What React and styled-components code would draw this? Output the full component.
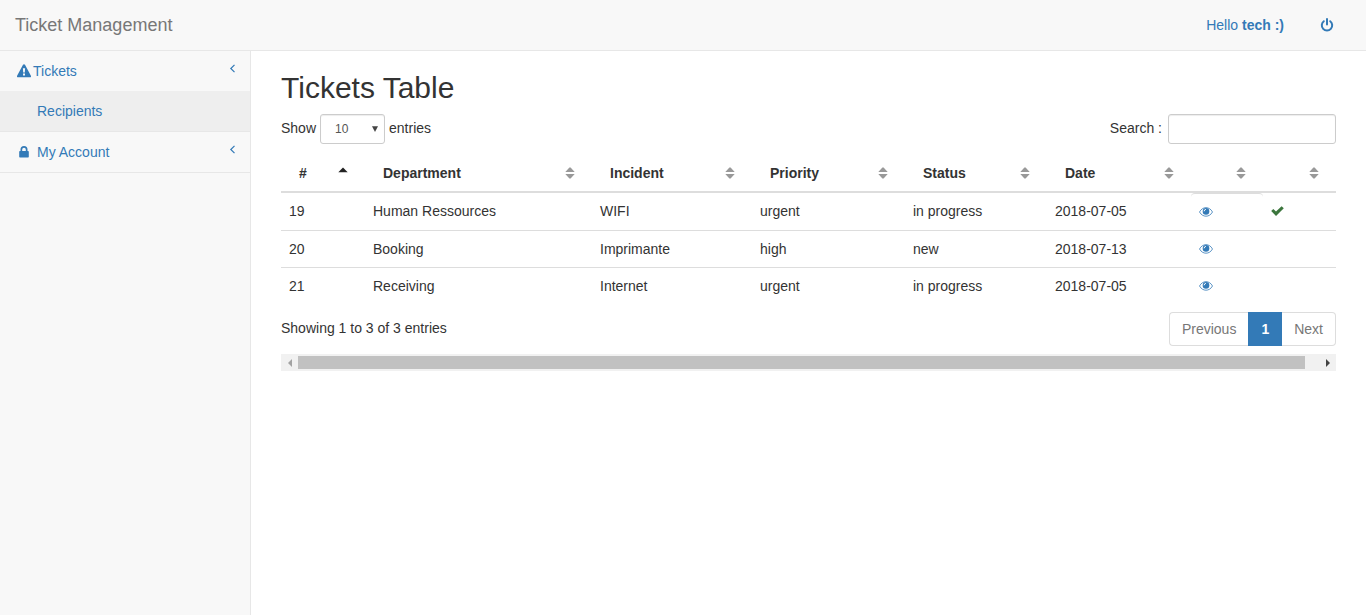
import React from "react";
import styled, { createGlobalStyle, css } from "styled-components";

const GlobalStyle = createGlobalStyle`
  * { box-sizing: border-box; }
  body {
    margin: 0;
    background: #fff;
    color: #333;
    font-family: "Liberation Sans", Arial, Helvetica, sans-serif;
    font-size: 14px;
    line-height: 20px;
  }
  button, input, select { font-family: inherit; }
  a { color: #337ab7; text-decoration: none; }
`;

const Page = styled.div`
  display: flex;
  flex-direction: column;
  min-height: 100vh;
`;

const Navbar = styled.header`
  display: flex;
  align-items: center;
  justify-content: space-between;
  padding: 15px;
  background: #f8f8f8;
  border-bottom: 1px solid #e7e7e7;
`;

const Brand = styled.a`
  color: #777;
  font-size: 18px;
`;

const UserLinks = styled.nav`
  display: flex;
  align-items: center;
  gap: 36px;
  padding-right: 17px;
`;

const IconLink = styled.a`
  display: flex;
  align-items: center;
`;

const Body = styled.div`
  display: flex;
  flex: 1;
`;

const Sidebar = styled.nav`
  flex: 0 0 251px;
  background: #f8f8f8;
  border-right: 1px solid #e7e7e7;
`;

const Menu = styled.ul`
  list-style: none;
  margin: 0;
  padding: 0;
`;

const MenuItem = styled.li`
  border-bottom: 1px solid #e7e7e7;
`;

const MenuLink = styled.a`
  display: flex;
  align-items: center;
  gap: ${(p) => p.$gap || 0}px;
  padding: 10px 14px 10px ${(p) => p.$indent}px;
  background: ${(p) => (p.$active ? "#eee" : "transparent")};
`;

const MenuArrow = styled.svg`
  margin: 0 0 5px auto;
`;

const Main = styled.main`
  flex: 1;
  min-width: 0;
  padding: 20px 30px;
`;

const Title = styled.h1`
  margin: 0 0 10px;
  font-size: 30px;
  font-weight: 400;
  line-height: 33px;
`;

const Controls = styled.div`
  display: flex;
  justify-content: space-between;
  margin-bottom: 11px;
`;

const Field = styled.label`
  display: flex;
  align-items: center;
  gap: ${(p) => p.$gap}px;
  height: 30px;
`;

const FieldText = styled.span`
  padding-bottom: 2px;
`;

const inputLook = css`
  height: 30px;
  border: 1px solid #ccc;
  border-radius: 3px;
  background: #fff;
  color: #555;
  font-size: 12px;
  box-shadow: inset 0 1px 1px rgba(0, 0, 0, 0.075);
`;

const SelectBox = styled.span`
  display: grid;
  align-items: center;
  & > * { grid-area: 1 / 1; }
  & > svg { justify-self: end; margin-right: 7px; pointer-events: none; }
`;

const Select = styled.select`
  ${inputLook}
  width: 65px;
  padding: 0 14px;
  appearance: none;
`;

const SearchInput = styled.input`
  ${inputLook}
  width: 168px;
  padding: 5px 10px;
`;

const Table = styled.table`
  width: 100%;
  table-layout: fixed;
  border-collapse: separate;
  border-spacing: 0;
`;

const HeadCell = styled.th`
  padding: 8px 17px 8px 18px;
  border-bottom: 2px solid #ddd;
  text-align: left;
`;

const HeadContent = styled.div`
  display: flex;
  align-items: center;
  justify-content: space-between;
  height: 20px;
`;

const Cell = styled.td`
  height: 37px;
  padding: 8px 8px 0;
  vertical-align: top;
  border-top: 1px solid #ddd;

  tr:first-child > & {
    border-top-width: ${(p) => (p.$marked ? 1 : 0)}px;
    border-radius: ${(p) => (p.$marked ? 4 : 0)}px;
  }
`;

const Footer = styled.div`
  display: flex;
  align-items: flex-start;
  justify-content: space-between;
  margin: 8px 0;
`;

const Info = styled.div`
  padding-top: 6px;
`;

const Pagination = styled.div`
  display: flex;
`;

const PageButton = styled.button`
  height: 34px;
  padding: 0 12px;
  border: 1px solid ${(p) => (p.$active ? "#337ab7" : "#ddd")};
  border-left-width: ${(p) => (p.$joined ? 0 : 1)}px;
  background: ${(p) => (p.$active ? "#337ab7" : "#fff")};
  color: ${(p) => (p.$active ? "#fff" : "#777")};
  font-size: 14px;
  font-weight: ${(p) => (p.$active ? 700 : 400)};
  &:first-child { border-radius: 4px 0 0 4px; border-right-width: 0; }
  &:last-child { border-radius: 0 4px 4px 0; }
`;

const ScrollBar = styled.div`
  display: flex;
  height: 17px;
  background: #f1f1f1;
`;

const ScrollButton = styled.button`
  display: flex;
  align-items: center;
  justify-content: center;
  width: 17px;
  padding: 0;
  border: 0;
  background: transparent;
`;

const ScrollTrack = styled.div`
  flex: 1;
  padding: 2px 14px 2px 0;
`;

const ScrollThumb = styled.div`
  height: 13px;
  background: #c1c1c1;
`;

const WarningIcon = () => (
  <svg width="14" height="14" viewBox="0 0 14 14" fill="#337ab7" aria-hidden="true">
    <path fillRule="evenodd" d="M7 .2c.4 0 .8.2 1 .6l5.900 11c.4.800 0 1.500-.9 1.500H1c-.9 0-1.300-.7-.9-1.500L6 .8C6.200.4 6.600.2 7 .2zM5.900 4.300l.3 4.200h1.600l.3-4.200zM6 9.500v1.900h2V9.500z" />
  </svg>
);

const LockIcon = () => (
  <svg width="10" height="12" viewBox="0 0 10 12" fill="#337ab7" aria-hidden="true">
    <path fillRule="evenodd" d="M1.500 5V3.500a3.500 3.500 0 0 1 7 0V5h.6c.4 0 .7.300.7.700v5.100c0 .4-.3.700-.7.700H.9c-.4 0-.7-.3-.7-.7V5.700c0-.4.3-.7.700-.7zM3.200 5h3.600V3.500a1.800 1.800 0 0 0-3.600 0z" />
  </svg>
);

const PowerIcon = () => (
  <svg width="14" height="14" viewBox="0 0 14 14" fill="none" stroke="#337ab7" strokeWidth="2" strokeLinecap="round" aria-hidden="true">
    <path d="M3.800 3.200a5.200 5.200 0 1 0 6.400 0M7 1v5.500" />
  </svg>
);

const EyeIcon = () => (
  <svg width="14" height="10" viewBox="0 0 14 10" aria-hidden="true">
    <path d="M.5 5C3.500-.8 10.500-.8 13.500 5 10.500 10.600 3.500 10.600.5 5z" fill="none" stroke="#337ab7" strokeWidth=".8" />
    <circle cx="7" cy="4.400" r="3.300" fill="#337ab7" />
    <path d="M5.100 4.300A2 2 0 0 1 6.900 2.400" fill="none" stroke="#fff" strokeWidth="1" />
  </svg>
);

const CheckIcon = () => (
  <svg width="13" height="10" viewBox="0 0 13 10" fill="#3c763d" aria-hidden="true">
    <path d="M.2 5.100L2.300 3 5 5.400 10.600.2 12.800 2.300 5 9.900z" />
  </svg>
);

const SortIcon = ({ ascending }) => (
  <svg width="10" height="12" viewBox="0 0 10 12" fill={ascending ? "#222" : "#999"} aria-hidden="true">
    {ascending ? <path d="M.3 5.300L5 .5l4.700 4.800z" /> : <path d="M.3 5.100L4.400.5h1.200l4.100 4.600zM.3 6.900h9.400L5.600 11.500H4.400z" />}
  </svg>
);

const CollapseArrow = () => (
  <MenuArrow width="7" height="9" viewBox="0 0 7 9" fill="none" stroke="#337ab7" strokeWidth="1.200" aria-hidden="true">
    <path d="M5.500.8L1.800 4.500l3.700 3.700" />
  </MenuArrow>
);

const columns = [
  { label: "#", width: 84, ascending: true },
  { label: "Department", width: 227 },
  { label: "Incident", width: 160 },
  { label: "Priority", width: 153 },
  { label: "Status", width: 142 },
  { label: "Date", width: 144 },
  { label: "", width: 72 },
  { label: "", width: 73 },
];

const tickets = [
  { values: ["19", "Human Ressources", "WIFI", "urgent", "in progress", "2018-07-05"], closable: true },
  { values: ["20", "Booking", "Imprimante", "high", "new", "2018-07-13"] },
  { values: ["21", "Receiving", "Internet", "urgent", "in progress", "2018-07-05"] },
];

const ActionLink = styled.a`
  display: flex;
  align-items: center;
  height: 20px;
`;

export default function App() {
  return (
    <Page>
      <GlobalStyle />
      <Navbar>
        <Brand href="#">Ticket Management</Brand>
        <UserLinks>
          <a href="#profile">Hello <b>tech :)</b></a>
          <IconLink href="#logout" aria-label="Log out"><PowerIcon /></IconLink>
        </UserLinks>
      </Navbar>
      <Body>
        <Sidebar>
          <Menu>
            <MenuItem>
              <MenuLink href="#tickets" $indent={17} $gap={2}>
                <WarningIcon />Tickets<CollapseArrow />
              </MenuLink>
              <MenuLink href="#recipients" $indent={37} $active>Recipients</MenuLink>
            </MenuItem>
            <MenuItem>
              <MenuLink href="#account" $indent={19} $gap={8}>
                <LockIcon />My Account<CollapseArrow />
              </MenuLink>
            </MenuItem>
          </Menu>
        </Sidebar>
        <Main>
          <Title>Tickets Table</Title>
          <Controls>
            <Field $gap={4}>
              <FieldText>Show</FieldText>
              <SelectBox>
                <Select defaultValue="10">
                  <option>10</option>
                  <option>25</option>
                  <option>50</option>
                </Select>
                <svg width="6" height="6" viewBox="0 0 6 6" fill="#444" aria-hidden="true">
                  <path d="M0 .3h6L3 6z" />
                </svg>
              </SelectBox>
              <FieldText>entries</FieldText>
            </Field>
            <Field $gap={6}>
              <FieldText>Search :</FieldText>
              <SearchInput type="search" />
            </Field>
          </Controls>
          <Table>
            <colgroup>
              {columns.map((c, i) => <col key={i} width={c.width} />)}
            </colgroup>
            <thead>
              <tr>
                {columns.map((c, i) => (
                  <HeadCell key={i} scope="col">
                    <HeadContent>
                      <span>{c.label}</span>
                      <SortIcon ascending={c.ascending} />
                    </HeadContent>
                  </HeadCell>
                ))}
              </tr>
            </thead>
            <tbody>
              {tickets.map((t) => (
                <tr key={t.values[0]}>
                  {t.values.map((v, i) => <Cell key={i}>{v}</Cell>)}
                  <Cell $marked>
                    <ActionLink href="#view" aria-label="View ticket"><EyeIcon /></ActionLink>
                  </Cell>
                  <Cell>
                    {t.closable && (
                      <ActionLink href="#close" aria-label="Close ticket"><CheckIcon /></ActionLink>
                    )}
                  </Cell>
                </tr>
              ))}
            </tbody>
          </Table>
          <Footer>
            <Info>Showing 1 to 3 of 3 entries</Info>
            <Pagination>
              <PageButton type="button">Previous</PageButton>
              <PageButton type="button" $active>1</PageButton>
              <PageButton type="button" $joined>Next</PageButton>
            </Pagination>
          </Footer>
          <ScrollBar>
            <ScrollButton type="button" aria-label="Scroll left">
              <svg width="4" height="8" viewBox="0 0 4 8" fill="#a3a3a3"><path d="M4 0v8L0 4z" /></svg>
            </ScrollButton>
            <ScrollTrack><ScrollThumb /></ScrollTrack>
            <ScrollButton type="button" aria-label="Scroll right">
              <svg width="4" height="8" viewBox="0 0 4 8" fill="#444"><path d="M0 0v8l4-4z" /></svg>
            </ScrollButton>
          </ScrollBar>
        </Main>
      </Body>
    </Page>
  );
}
